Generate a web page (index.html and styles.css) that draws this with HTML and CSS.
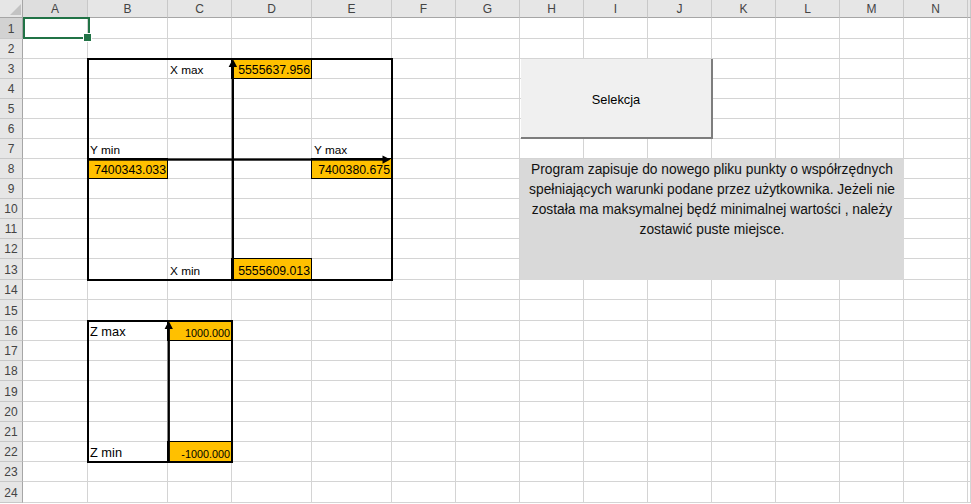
FILE: index.html
```html
<!DOCTYPE html>
<html lang="pl">
<head>
<meta charset="utf-8">
<title>Selekcja</title>
<link rel="stylesheet" href="styles.css">
</head>
<body>
<div class="sheet">
  <div class="grid cells">
    <div class="corner"></div>
    <div class="ch ch-sel">A</div><div class="ch">B</div><div class="ch">C</div><div class="ch">D</div><div class="ch">E</div><div class="ch">F</div><div class="ch">G</div><div class="ch">H</div><div class="ch">I</div><div class="ch">J</div><div class="ch">K</div><div class="ch">L</div><div class="ch">M</div><div class="ch">N</div><div class="ch"></div>
    <div class="rh rh-sel">1</div><i></i><i></i><i></i><i></i><i></i><i></i><i></i><i></i><i></i><i></i><i></i><i></i><i></i><i></i><i></i>
    <div class="rh">2</div><i></i><i></i><i></i><i></i><i></i><i></i><i></i><i></i><i></i><i></i><i></i><i></i><i></i><i></i><i></i>
    <div class="rh">3</div><i></i><i></i><i></i><i></i><i></i><i></i><i></i><i></i><i></i><i></i><i></i><i></i><i></i><i></i><i></i>
    <div class="rh">4</div><i></i><i></i><i></i><i></i><i></i><i></i><i></i><i></i><i></i><i></i><i></i><i></i><i></i><i></i><i></i>
    <div class="rh">5</div><i></i><i></i><i></i><i></i><i></i><i></i><i></i><i></i><i></i><i></i><i></i><i></i><i></i><i></i><i></i>
    <div class="rh">6</div><i></i><i></i><i></i><i></i><i></i><i></i><i></i><i></i><i></i><i></i><i></i><i></i><i></i><i></i><i></i>
    <div class="rh">7</div><i></i><i></i><i></i><i></i><i></i><i></i><i></i><i></i><i></i><i></i><i></i><i></i><i></i><i></i><i></i>
    <div class="rh">8</div><i></i><i></i><i></i><i></i><i></i><i></i><i></i><i></i><i></i><i></i><i></i><i></i><i></i><i></i><i></i>
    <div class="rh">9</div><i></i><i></i><i></i><i></i><i></i><i></i><i></i><i></i><i></i><i></i><i></i><i></i><i></i><i></i><i></i>
    <div class="rh">10</div><i></i><i></i><i></i><i></i><i></i><i></i><i></i><i></i><i></i><i></i><i></i><i></i><i></i><i></i><i></i>
    <div class="rh">11</div><i></i><i></i><i></i><i></i><i></i><i></i><i></i><i></i><i></i><i></i><i></i><i></i><i></i><i></i><i></i>
    <div class="rh">12</div><i></i><i></i><i></i><i></i><i></i><i></i><i></i><i></i><i></i><i></i><i></i><i></i><i></i><i></i><i></i>
    <div class="rh">13</div><i></i><i></i><i></i><i></i><i></i><i></i><i></i><i></i><i></i><i></i><i></i><i></i><i></i><i></i><i></i>
    <div class="rh">14</div><i></i><i></i><i></i><i></i><i></i><i></i><i></i><i></i><i></i><i></i><i></i><i></i><i></i><i></i><i></i>
    <div class="rh">15</div><i></i><i></i><i></i><i></i><i></i><i></i><i></i><i></i><i></i><i></i><i></i><i></i><i></i><i></i><i></i>
    <div class="rh">16</div><i></i><i></i><i></i><i></i><i></i><i></i><i></i><i></i><i></i><i></i><i></i><i></i><i></i><i></i><i></i>
    <div class="rh">17</div><i></i><i></i><i></i><i></i><i></i><i></i><i></i><i></i><i></i><i></i><i></i><i></i><i></i><i></i><i></i>
    <div class="rh">18</div><i></i><i></i><i></i><i></i><i></i><i></i><i></i><i></i><i></i><i></i><i></i><i></i><i></i><i></i><i></i>
    <div class="rh">19</div><i></i><i></i><i></i><i></i><i></i><i></i><i></i><i></i><i></i><i></i><i></i><i></i><i></i><i></i><i></i>
    <div class="rh">20</div><i></i><i></i><i></i><i></i><i></i><i></i><i></i><i></i><i></i><i></i><i></i><i></i><i></i><i></i><i></i>
    <div class="rh">21</div><i></i><i></i><i></i><i></i><i></i><i></i><i></i><i></i><i></i><i></i><i></i><i></i><i></i><i></i><i></i>
    <div class="rh">22</div><i></i><i></i><i></i><i></i><i></i><i></i><i></i><i></i><i></i><i></i><i></i><i></i><i></i><i></i><i></i>
    <div class="rh">23</div><i></i><i></i><i></i><i></i><i></i><i></i><i></i><i></i><i></i><i></i><i></i><i></i><i></i><i></i><i></i>
    <div class="rh">24</div><i></i><i></i><i></i><i></i><i></i><i></i><i></i><i></i><i></i><i></i><i></i><i></i><i></i><i></i><i></i>
  </div>

  <div class="grid layer">
    <div class="sel"></div>

    <div class="hl num at-d3">5555637.956</div>
    <div class="hl num at-b8">7400343.033</div>
    <div class="hl num at-e8">7400380.675</div>
    <div class="hl num at-d13">5555609.013</div>

    <div class="lbl at-c3">X max</div>
    <div class="lbl at-b7">Y min</div>
    <div class="lbl at-e7">Y max</div>
    <div class="lbl at-c13">X min</div>

    <div class="box box-xy"></div>
    <svg class="axes box-xy-area" aria-hidden="true">
      <rect x="143.7" y="6" width="2.3" height="215" fill="#000"/>
      <polygon points="144.85,0 140.6,8 149.1,8" fill="#000"/>
      <rect x="0" y="99.4" width="296" height="2.3" fill="#000"/>
      <polygon points="302.5,100.55 294.5,96.4 294.5,104.7" fill="#000"/>
    </svg>

    <div class="hl num small at-c16">1000.000</div>
    <div class="hl num small at-c22">-1000.000</div>
    <div class="lbl big at-b16">Z max</div>
    <div class="lbl big at-b22">Z min</div>

    <div class="box box-z"></div>
    <svg class="axes box-z-area" aria-hidden="true">
      <rect x="79.6" y="6" width="2.3" height="135" fill="#000"/>
      <polygon points="80.75,0 76.6,8 84.9,8" fill="#000"/>
    </svg>

    <div class="button">Selekcja</div>

    <div class="note">Program zapisuje do nowego pliku punkty o współrzędnych<br>spełniających warunki podane przez użytkownika. Jeżeli nie<br>została ma maksymalnej będź minimalnej wartości , należy<br>zostawić puste miejsce.</div>
  </div>
</div>
</body>
</html>
```

FILE: styles.css
```css
* {
  box-sizing: border-box;
}

html,
body {
  margin: 0;
  padding: 0;
  background: #ffffff;
}

body {
  width: 971px;
  height: 504px;
  overflow: hidden;
  font-family: "Liberation Sans", Arial, sans-serif;
  color: #000000;
}

.sheet {
  position: relative;
  width: 971px;
}

.grid {
  display: grid;
  grid-template-columns: 23px 65px 80px 64px 80px 80px repeat(9, 64px) 3px;
  grid-template-rows:
    18px 21px repeat(11, 20px) 21px 20px 21px 20px 20px 20px 21px 20px 20px 20px 20px 21px;
  width: 971px;
}

/* ---------- sheet cells & headers ---------- */

.cells i {
  display: block;
  border-right: 1px solid #d4d4d4;
  border-bottom: 1px solid #d4d4d4;
}

.corner {
  position: relative;
  background: #e6e6e6;
  border-right: 1px solid #a6a6a6;
  border-bottom: 1px solid #a6a6a6;
}

.corner::after {
  content: "";
  position: absolute;
  left: 10px;
  top: 4px;
  width: 11px;
  height: 11px;
  background: #c3c3c3;
  clip-path: polygon(100% 0, 100% 100%, 0 100%);
}

.ch,
.rh {
  display: flex;
  align-items: center;
  justify-content: center;
  background: #e6e6e6;
  color: #444444;
  font-size: 12px;
}

.ch {
  border-right: 1px solid #c8c8c8;
  border-bottom: 1px solid #a6a6a6;
}

.rh {
  padding-top: 1px;
  border-right: 1px solid #a6a6a6;
  border-bottom: 1px solid #c8c8c8;
}

.ch-sel {
  background: #dedede;
}

.rh-sel {
  background: #d2d2d2;
}

/* ---------- overlay layer ---------- */

.layer {
  position: absolute;
  left: 0;
  top: 0;
}

.sel {
  position: relative;
  grid-area: 2 / 2 / 3 / 3;
  margin: -1px -2px 0 0;
  border: 2px solid #217346;
}

.sel::after {
  content: "";
  position: absolute;
  right: -4px;
  bottom: -5px;
  width: 7px;
  height: 7px;
  background: #217346;
  border: 1px solid #ffffff;
}

.hl {
  margin: -1px 0 0 -1px;
  background: #ffc000;
  border: 1px solid #000000;
}

.num {
  display: flex;
  align-items: flex-end;
  justify-content: flex-end;
  padding: 0 1px 0 0;
  font-size: 12.3px;
  line-height: 15px;
  white-space: nowrap;
}

.num.small {
  font-size: 10.8px;
  line-height: 14px;
  padding-bottom: 0;
}

.lbl {
  display: flex;
  align-items: flex-end;
  padding: 0 0 1px 2px;
  font-size: 11.8px;
  line-height: 15px;
  white-space: nowrap;
}

.lbl.big {
  font-size: 12.8px;
  line-height: 16px;
}

.at-d3 { grid-area: 4 / 5 / 5 / 6; }
.at-b8 { grid-area: 9 / 3 / 10 / 4; }
.at-e8 { grid-area: 9 / 6 / 10 / 7; }
.at-d13 { grid-area: 14 / 5 / 15 / 6; }
.at-c3 { grid-area: 4 / 4 / 5 / 5; }
.at-b7 { grid-area: 8 / 3 / 9 / 4; }
.at-e7 { grid-area: 8 / 6 / 9 / 7; }
.at-c13 { grid-area: 14 / 4 / 15 / 5; }
.at-c16 { grid-area: 17 / 4 / 18 / 5; }
.at-c22 { grid-area: 23 / 4 / 24 / 5; }
.at-b16 { grid-area: 17 / 3 / 18 / 4; }
.at-b22 { grid-area: 23 / 3 / 24 / 4; }

.box {
  margin: -1px;
  border: 2px solid #000000;
}

.box-xy,
.box-xy-area {
  grid-area: 4 / 3 / 15 / 7;
}

.box-z,
.box-z-area {
  grid-area: 17 / 3 / 24 / 5;
}

.axes {
  width: 100%;
  height: 100%;
  overflow: visible;
}

.button {
  grid-area: 4 / 9 / 8 / 12;
  display: flex;
  align-items: center;
  justify-content: center;
  padding-top: 3px;
  margin-left: 1px;
  margin-right: -1px;
  background: #f0f0f0;
  border-right: 2px solid #7d7d7d;
  border-bottom: 2px solid #7d7d7d;
  font-size: 12.8px;
  color: #000000;
}

.note {
  grid-area: 9 / 9 / 15 / 15;
  padding: 1px 2px 0;
  background: #d9d9d9;
  text-align: center;
  font-size: 13.8px;
  line-height: 20px;
  white-space: nowrap;
  color: #111111;
}
```
